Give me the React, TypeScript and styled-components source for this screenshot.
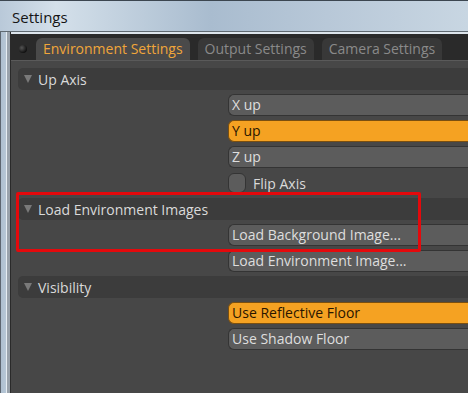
import React, {FC} from 'react';
import styled, {createGlobalStyle} from 'styled-components';

const Global = createGlobalStyle`
  body {
    margin: 0;
    background: #474747;
    overflow: hidden;
    font-family: "Open Sans", "Liberation Sans", sans-serif;
  }
`

const Window = styled.div`
  position: relative;
  width: 468px;
  height: 393px;
  overflow: hidden;
  display: flex;
  flex-direction: column;
  background: #474747;
`

const TitleBar = styled.div`
  height: 32px;
  flex: none;
  box-sizing: border-box;
  border-top: 1px solid #3c4650;
  padding: 6px 0 0 12px;
  background: linear-gradient(90deg, #b9c9d9 0%, #d4e0ea 12%, #a9bccf 45%, #b8c8d8 70%, #c8d6e2 100%);
  font-size: 15px;
  color: #141414;
  border-bottom: 1px solid #606a72;
`

const Body = styled.div`
  flex: 1;
  display: flex;
  min-height: 0;
`

const Frame = styled.div`
  width: 11px;
  flex: none;
  background: linear-gradient(90deg, #5d6670 0px, #5d6670 1px, #aebfd0 1px, #b7c7d6 6px, #e6edf3 6px, #e6edf3 7px, #9aa3ac 7px, #9aa3ac 10px, #2a2a2a 10px);
`

const Content = styled.div`
  flex: 1;
  min-width: 0;
  display: flex;
  flex-direction: column;
  border-top: 2px solid #dde5ec;
`

const TabBar = styled.div`
  height: 26px;
  flex: none;
  display: flex;
  align-items: flex-end;
  gap: 8px;
  padding-left: 8px;
  background: #2a2a2a;
  border-bottom: 1px solid #5a5a5a;
`

const Knob = styled.div`
  width: 8px;
  height: 8px;
  border-radius: 50%;
  align-self: center;
  margin: 4px 1px 0 0;
  background: radial-gradient(circle at 35% 35%, #555 0%, #111 70%);
`

const Tab = styled.div<{active?: boolean}>`
  height: 22px;
  box-sizing: border-box;
  padding: 0 7px;
  border-radius: 6px 6px 0 0;
  font-size: 14px;
  line-height: 22px;
  white-space: nowrap;
  background: ${p => p.active ? '#4a4a4a' : '#383838'};
  color: ${p => p.active ? '#f0a63a' : '#8a8a8a'};
`

const Panel = styled.div`
  flex: 1;
  width: 560px;
  display: flex;
  flex-direction: column;
  gap: 4px;
  padding: 7px 0 0 7px;
  background: #474747;
`

const Header = styled.div`
  height: 22px;
  display: flex;
  align-items: center;
  gap: 6px;
  padding-left: 6px;
  border-radius: 5px 0 0 5px;
  background: #3c3c3c;
  font-size: 14px;
  color: #dadada;
`

const Arrow = styled.span`
  width: 0;
  height: 0;
  border-left: 4px solid transparent;
  border-right: 4px solid transparent;
  border-top: 8px solid #7a7a7a;
`

const Row = styled.div`
  height: 22px;
  display: flex;
  padding-left: 210px;
`

const Button = styled.div<{on?: boolean}>`
  flex: 1;
  box-sizing: border-box;
  border-radius: 6px 0 0 6px;
  border: 1px solid ${p => p.on ? '#7a4f10' : '#343434'};
  border-right: none;
  padding-left: 3px;
  font-size: 14px;
  line-height: 20px;
  background: ${p => p.on ? '#f5a222' : '#5c5c5c'};
  color: ${p => p.on ? '#2a1600' : '#dedede'};
`

const Check = styled.label`
  display: flex;
  align-items: center;
  gap: 7px;
  font-size: 14px;
  color: #dadada;
`

const Box = styled.span`
  width: 18px;
  height: 20px;
  box-sizing: border-box;
  border-radius: 6px;
  border: 1px solid #343434;
  background: #5c5c5c;
`

const Highlight = styled.div`
  position: absolute;
  left: 16px;
  top: 192px;
  width: 405px;
  height: 60px;
  box-sizing: border-box;
  border: 3px solid #e4090c;
  border-radius: 2px;
  pointer-events: none;
`

const App: FC = () => {
  return (
    <Window>
      <Global />
      <TitleBar>Settings</TitleBar>
      <Body>
        <Frame />
        <Content>
          <TabBar>
            <Knob />
            <Tab active>Environment Settings</Tab>
            <Tab>Output Settings</Tab>
            <Tab>Camera Settings</Tab>
          </TabBar>
          <Panel>
            <Header><Arrow />Up Axis</Header>
            <Row><Button>X up</Button></Row>
            <Row><Button on>Y up</Button></Row>
            <Row><Button>Z up</Button></Row>
            <Row><Check><Box />Flip Axis</Check></Row>
            <Header><Arrow />Load Environment Images</Header>
            <Row><Button>Load Background Image...</Button></Row>
            <Row><Button>Load Environment Image...</Button></Row>
            <Header><Arrow />Visibility</Header>
            <Row><Button on>Use Reflective Floor</Button></Row>
            <Row><Button>Use Shadow Floor</Button></Row>
          </Panel>
        </Content>
      </Body>
      <Highlight />
    </Window>
  )
}

export default App
